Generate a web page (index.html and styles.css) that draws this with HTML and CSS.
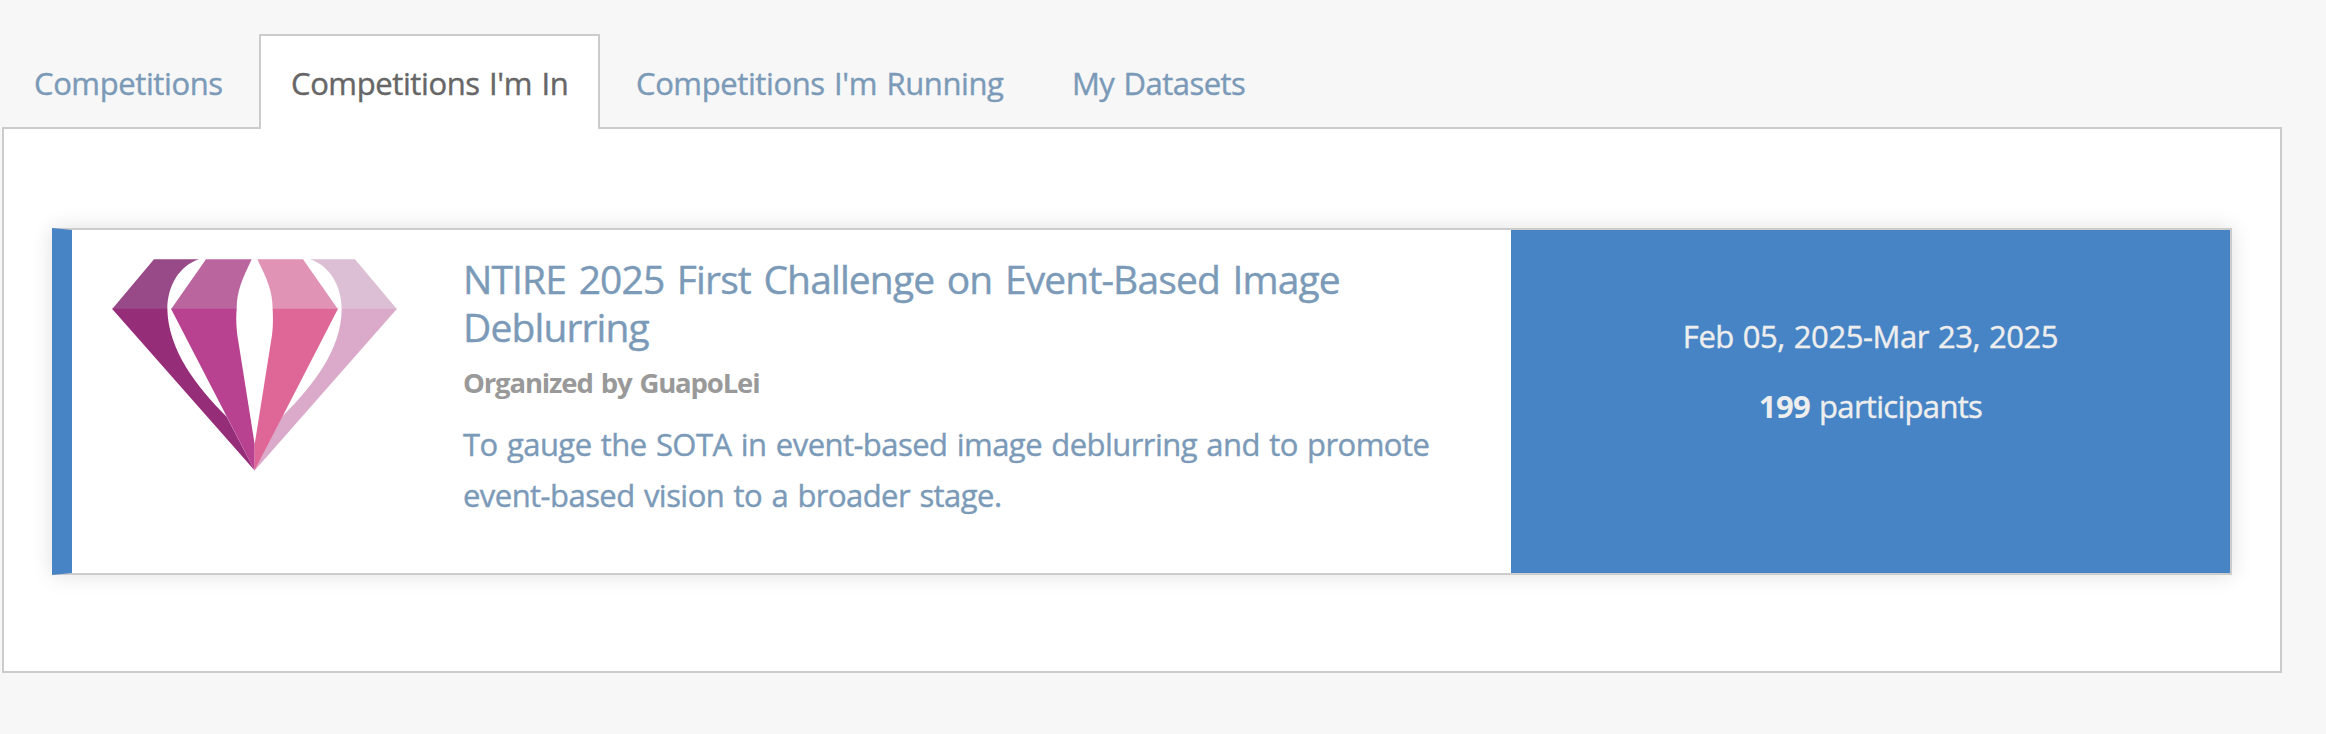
FILE: index.html
```html
<!DOCTYPE html>
<html lang="en">
<head>
<meta charset="utf-8">
<title>Competitions</title>
<link rel="stylesheet" href="styles.css">
</head>
<body>
<nav class="tabs">
  <a class="tab tab-all">Competitions</a>
  <a class="tab tab-in active">Competitions I'm In</a>
  <a class="tab tab-running">Competitions I'm Running</a>
  <a class="tab tab-data">My Datasets</a>
</nav>
<main class="panel">
  <article class="card">
    <div class="logo">
      <svg viewBox="66 57 855 635" width="285" height="212" aria-hidden="true">
        <path fill="#984988" d="M192 57H327C270 75 232 135 232 207H66Z"/>
        <path fill="#962d79" d="M66 206H232C234 330 320 440 410 530L494 691Z"/>
        <path fill="#dcbfd5" d="M660 57H795L921 207H755C755 135 717 75 660 57Z"/>
        <path fill="#dbaaca" d="M755 206H921L494 691L576 530C666 440 755 330 755 206Z"/>
        <path fill="#bb659f" d="M348 57H485C458 115 440 150 440 207H243Z"/>
        <path fill="#b84190" d="M243 206H440C437 245 440 275 446 310L494 612V691Z"/>
        <path fill="#e193b5" d="M502 57H639L744 207H548C548 150 530 115 502 57Z"/>
        <path fill="#df6797" d="M548 206H744L494 691V612L542 310C549 275 550 245 548 206Z"/>
      </svg>
    </div>
    <div class="info">
      <h3 class="title">NTIRE 2025 First Challenge on Event-Based Image Deblurring</h3>
      <h4 class="organizer">Organized by GuapoLei</h4>
      <p class="description">To gauge the SOTA in event-based image deblurring and to promote event-based vision to a broader stage.</p>
    </div>
    <div class="stats">
      <p class="dates">Feb 05, 2025-Mar 23, 2025</p>
      <p class="people"><strong>199</strong> participants</p>
    </div>
  </article>
</main>
</body>
</html>
```
FILE: styles.css
```css
* { box-sizing: border-box; }
body {
  margin: 0;
  height: 734px;
  padding: 34px 44px 0 2px;
  background: #f7f7f7;
  font-family: "Open Sans", "Noto Sans", sans-serif;
  font-size: 31px;
  letter-spacing: -.4px;
  word-spacing: 1.8px;
  color: #7b9ab8;
  -webkit-text-stroke: .4px currentColor;
  overflow: hidden;
}
h3, h4, p { margin: 0; }
.tabs {
  display: flex;
  height: 95px;
  margin-bottom: -2px;
  position: relative;
  z-index: 1;
}
.tab {
  height: 95px;
  padding: 1px 0 0 30px;
  border: 2px solid transparent;
  border-bottom: 0;
  line-height: 92px;
  white-space: nowrap;
}
.tab-all { width: 257px; }
.tab-in { width: 341px; }
.tab-running { width: 435px; padding-left: 34px; }
.tab-data { padding-left: 35px; letter-spacing: -.55px; }
.active {
  background: #fff;
  border-color: #ccc;
  color: #666;
}
.panel {
  width: 2280px;
  height: 546px;
  padding: 99px 48px 0;
  background: #fff;
  border: 2px solid #ccc;
}
.card {
  display: grid;
  grid-template-columns: 391px 1048px 719px;
  height: 347px;
  border: 2px solid #ccc;
  border-left: 20px solid #4684c5;
  box-shadow: 0 0 20px rgba(0, 0, 0, .13);
}
.logo { padding: 29px 0 0 40px; }
.logo svg { display: block; }
.info { padding: 25px 70px 0 0; }
.title {
  font-size: 39px;
  font-weight: 400;
  line-height: 48px;
  letter-spacing: -.88px;
  word-spacing: 3.3px;
}
.organizer {
  margin-top: 12px;
  font-size: 27.5px;
  line-height: 40px;
  letter-spacing: -1.15px;
  word-spacing: 2px;
  color: #999;
  -webkit-text-stroke: 0;
}
.description {
  margin-top: 16px;
  line-height: 51px;
  letter-spacing: -.55px;
}
.stats {
  padding-top: 71px;
  background: #4684c5;
  color: #eee;
  text-align: center;
}
.dates {
  line-height: 70px;
  letter-spacing: -.42px;
  word-spacing: 1.2px;
}
.people { line-height: 70px; letter-spacing: -.7px; }
.people strong { -webkit-text-stroke: 0; }
```
